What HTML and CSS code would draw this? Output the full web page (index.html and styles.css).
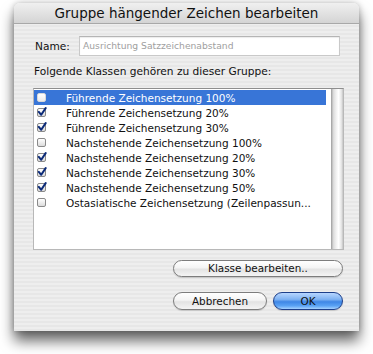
FILE: index.html
```html
<!DOCTYPE html>
<html>
<head>
<meta charset="utf-8">
<link rel="stylesheet" href="styles.css">
</head>
<body>
<div class="window">
  <div class="titlebar">Gruppe hängender Zeichen bearbeiten</div>
  <div class="name-row">
    <span class="name-label">Name:</span>
    <div class="field">Ausrichtung Satzzeichenabstand</div>
  </div>
  <div class="section-label">Folgende Klassen gehören zu dieser Gruppe:</div>
  <div class="list">
    <div class="rows">
      <div class="row selected"><span class="cb"></span><span class="txt">Führende Zeichensetzung 100%</span></div>
      <div class="row"><span class="cb checked"><svg viewBox="0 0 9 9" width="9" height="9"><path d="M1.6 4.4 L3.8 7 L7.8 1" fill="none" stroke="#0b2a78" stroke-width="1.8" stroke-linecap="round" stroke-linejoin="round"/></svg></span><span class="txt">Führende Zeichensetzung 20%</span></div>
      <div class="row"><span class="cb checked"><svg viewBox="0 0 9 9" width="9" height="9"><path d="M1.6 4.4 L3.8 7 L7.8 1" fill="none" stroke="#0b2a78" stroke-width="1.8" stroke-linecap="round" stroke-linejoin="round"/></svg></span><span class="txt">Führende Zeichensetzung 30%</span></div>
      <div class="row"><span class="cb"></span><span class="txt">Nachstehende Zeichensetzung 100%</span></div>
      <div class="row"><span class="cb checked"><svg viewBox="0 0 9 9" width="9" height="9"><path d="M1.6 4.4 L3.8 7 L7.8 1" fill="none" stroke="#0b2a78" stroke-width="1.8" stroke-linecap="round" stroke-linejoin="round"/></svg></span><span class="txt">Nachstehende Zeichensetzung 20%</span></div>
      <div class="row"><span class="cb checked"><svg viewBox="0 0 9 9" width="9" height="9"><path d="M1.6 4.4 L3.8 7 L7.8 1" fill="none" stroke="#0b2a78" stroke-width="1.8" stroke-linecap="round" stroke-linejoin="round"/></svg></span><span class="txt">Nachstehende Zeichensetzung 30%</span></div>
      <div class="row"><span class="cb checked"><svg viewBox="0 0 9 9" width="9" height="9"><path d="M1.6 4.4 L3.8 7 L7.8 1" fill="none" stroke="#0b2a78" stroke-width="1.8" stroke-linecap="round" stroke-linejoin="round"/></svg></span><span class="txt">Nachstehende Zeichensetzung 50%</span></div>
      <div class="row"><span class="cb"></span><span class="txt">Ostasiatische Zeichensetzung (Zeilenpassun...</span></div>
    </div>
    <div class="scrollbar"></div>
  </div>
  <div class="btn-single">
    <div class="btn wide">Klasse bearbeiten..</div>
  </div>
  <div class="btn-row">
    <div class="btn cancel">Abbrechen</div>
    <div class="btn ok">OK</div>
  </div>
</div>
</body>
</html>
```
FILE: styles.css
```css
html, body {
  margin: 0;
  padding: 0;
  background: #ffffff;
}
body {
  width: 373px;
  height: 354px;
  overflow: hidden;
  font-family: "DejaVu Sans", "Liberation Sans", sans-serif;
  color: #111;
}
.window {
  margin: 3px 0 0 14px;
  width: 345px;
  height: 328px;
  border-radius: 6px 6px 0 0;
  background: repeating-linear-gradient(to bottom, #eeeeee 0, #eeeeee 2px, #e7e7e7 2px, #e7e7e7 4px);
  box-shadow: 0 10px 14px rgba(0,0,0,0.6), 0 0 6px rgba(0,0,0,0.25);
  display: flex;
  flex-direction: column;
  box-sizing: border-box;
}
.titlebar {
  height: 21px;
  box-sizing: border-box;
  border-radius: 6px 6px 0 0;
  background: linear-gradient(to bottom, #f0f0f0 0%, #e2e2e2 50%, #d4d4d4 100%);
  border-bottom: 1px solid #a8a8a8;
  font-size: 13.5px;
  line-height: 20px;
  text-align: center;
  color: #111;
}
.name-row {
  margin-top: 12px;
  height: 20px;
  display: flex;
  align-items: center;
}
.name-label {
  margin-left: 21px;
  width: 44px;
  font-size: 10.6px;
}
.field {
  width: 261px;
  height: 20px;
  box-sizing: border-box;
  background: #fff;
  border: 1px solid #c9c9c9;
  border-top-color: #b5b5b5;
  box-shadow: inset 0 1px 1px rgba(0,0,0,0.08);
  font-size: 9.2px;
  line-height: 18px;
  padding-left: 3px;
  color: #a0a0a0;
}
.section-label {
  margin-top: 8px;
  margin-left: 20px;
  height: 14px;
  line-height: 14px;
  font-size: 10.6px;
}
.list {
  margin-top: 10px;
  margin-left: 19px;
  width: 311px;
  height: 162px;
  box-sizing: border-box;
  background: #fff;
  border: 1px solid #b8b8b8;
  border-top-color: #8e8e8e;
  display: flex;
}
.rows {
  flex: 1;
  padding-top: 1px;
  padding-right: 5px;
}
.row {
  height: 15px;
  display: flex;
  align-items: center;
  font-size: 10.5px;
  color: #111;
}
.row.selected {
  background: #3875d7;
  color: #fff;
}
.cb {
  margin-left: 3px;
  width: 9px;
  height: 9px;
  box-sizing: border-box;
  border: 1px solid #8a8a8a;
  border-radius: 2px;
  background: linear-gradient(to bottom, #ffffff, #dcdcdc);
  position: relative;
  flex: none;
}
.row.selected .cb {
  border-color: #d8d8d8;
  background: linear-gradient(to bottom, #ffffff, #ececec);
}
.cb svg {
  position: absolute;
  left: -1px;
  top: -2px;
  width: 10px;
  height: 10px;
}
.txt {
  margin-left: 20px;
  white-space: nowrap;
}
.scrollbar {
  width: 11px;
  flex: none;
  background: linear-gradient(to right, #b9b9b9 0%, #dedede 15%, #f6f6f6 45%, #ffffff 60%, #e6e6e6 85%, #c4c4c4 100%);
  border-left: 1px solid #a9a9a9;
}
.btn-single {
  margin-top: 10px;
  margin-left: 159px;
}
.btn {
  height: 17px;
  box-sizing: border-box;
  border-radius: 9px;
  border: 1px solid #7d7d7d;
  background: linear-gradient(to bottom, #ffffff 0%, #f4f4f4 45%, #e3e3e3 55%, #f4f4f4 100%);
  box-shadow: 0 1px 1px rgba(0,0,0,0.15);
  font-size: 10.4px;
  line-height: 15px;
  text-align: center;
  color: #111;
}
.btn.wide {
  width: 170px;
}
.btn-row {
  margin-top: 15px;
  margin-left: 159px;
  display: flex;
  gap: 6px;
}
.btn-row .btn {
  height: 18px;
  line-height: 16px;
}
.btn.cancel {
  width: 94px;
}
.btn.ok {
  width: 70px;
  border-color: #1d3f8a;
  background: linear-gradient(to bottom, #b7d6ff 0%, #7fb2f2 40%, #3f87e6 55%, #5aa2f4 80%, #a6d2ff 100%);
}
```
